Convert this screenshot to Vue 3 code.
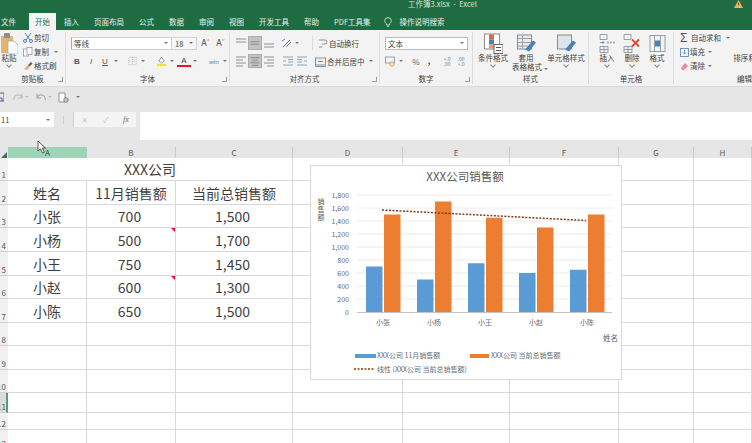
<template>
  <div class="excel">
    <div class="title-bar">
      <span class="doc-name">工作簿3.xlsx&nbsp; -&nbsp; Excel</span>
      <svg class="warn" width="9" height="8" viewBox="0 0 9 8"><path d="M4.5 0L9 8H0z" fill="#f0b35a"/><path d="M4.5 2.5v3" stroke="#7a5a20" stroke-width="1"/></svg>
    </div>
    <div class="tabs">
      <span v-for="tab in tabs" :key="tab" class="tab" :class="{ active: tab === '开始' }">{{ tab }}</span>
      <svg class="bulb" width="8" height="10" viewBox="0 0 8 10" fill="none" stroke="#e8f2ec" stroke-width="0.8"><path d="M2.4 6.6C1.4 5.9.7 5 .7 3.9a3.3 3.3 0 0 1 6.6 0c0 1.100-.7 2-1.700 2.700V8H2.400z"/><path d="M3 9.400h2"/></svg>
      <span class="search">操作说明搜索</span>
    </div>

    <div class="ribbon">
      <section class="group g-clip">
        <div class="body clip-body">
          <div class="big paste">
            <svg width="17" height="21" viewBox="0 0 17 21"><rect x="0" y="3" width="12" height="17" rx="1" fill="#e4b36c"/><rect x="3" y="0" width="6" height="5" rx="1" fill="#8d8d8d"/><path d="M7 8h6l4 4v9H7z" fill="#fff" stroke="#a0a0a0" stroke-width="0.7"/></svg>
            <span>粘贴</span>
            <i class="chev"></i>
          </div>
          <div class="clip-list">
            <div class="line">
              <svg width="10" height="10" viewBox="0 0 10 10" fill="none" stroke="#4a7fb8"><path d="M2 0l5 7M8 0L3 7"/><circle cx="2" cy="8" r="1.500"/><circle cx="8" cy="8" r="1.500"/></svg>
              <span>剪切</span>
            </div>
            <div class="line">
              <svg width="10" height="10" viewBox="0 0 10 10" fill="#fff" stroke="#8a9aa8" stroke-width="0.8"><rect x="0.500" y="2" width="5" height="7"/><rect x="4" y="0.500" width="5" height="7"/></svg>
              <span>复制</span>
              <i class="caret m-l4"></i>
            </div>
            <div class="line">
              <svg width="10" height="10" viewBox="0 0 10 10"><path d="M5 4l3-3 1.500 1.500-3 3z" fill="#5c5c5c"/><path d="M1 8l4-4 2 2-3 3z" fill="#e4b36c"/></svg>
              <span>格式刷</span>
            </div>
          </div>
        </div>
        <div class="label"><b></b><span>剪贴板</span><em></em></div>
      </section>

      <section class="group g-font">
        <div class="body">
          <div class="row">
            <div class="select font-name"><span>等线</span><i class="caret"></i></div>
            <div class="select font-size"><span>18</span><i class="caret"></i></div>
            <span class="tb grow-a">A<sup>^</sup></span>
            <span class="tb shrink-a">A<sup>ˇ</sup></span>
          </div>
          <div class="row">
            <span class="tb bold">B</span>
            <span class="tb ital">I</span>
            <span class="tb under">U</span>
            <i class="caret"></i>
            <svg class="m-l6" width="14" height="10" viewBox="0 0 14 10" fill="none" stroke="#9a9a9a" stroke-width="0.7" stroke-dasharray="1 1"><rect x="3" y="1" width="8" height="8"/><path d="M7 1v8M3 5h8"/></svg>
            <i class="caret"></i>
            <svg class="m-l8" width="14" height="12" viewBox="0 0 14 12"><path d="M4 6l3-4 3 4-3 2z" fill="#fff" stroke="#666" stroke-width="0.7"/><rect x="2" y="9" width="10" height="2.500" fill="#f6e71e"/></svg>
            <i class="caret"></i>
            <span class="tb color-a">A</span>
            <i class="caret"></i>
            <span class="tb wen m-l8">wén</span>
            <i class="caret"></i>
          </div>
        </div>
        <div class="label"><b></b><span>字体</span><em></em></div>
      </section>

      <section class="group g-align">
        <div class="body">
          <div class="row">
            <svg v-for="a in alignTop" :key="a.id" class="align-ico" :class="{ on: a.on }" width="14" height="14" viewBox="0 0 14 14" stroke="#777" stroke-width="0.8"><path :d="a.d"/></svg>
            <svg class="m-l5" width="12" height="10" viewBox="0 0 12 10" fill="none" stroke="#6f6f6f"><path d="M2 9l7-7M5 9l5-5"/><path d="M1 3l3-2" stroke="#5b87b8"/></svg>
            <i class="caret"></i>
            <span class="v-sep"></span>
            <svg class="m-l5" width="10" height="10" viewBox="0 0 10 10" fill="none" stroke="#777" stroke-width="0.8"><path d="M1 2h6a2 2 0 0 1 0 4H4M1 9h3"/></svg>
            <span class="txt m-l1">自动换行</span>
          </div>
          <div class="row">
            <svg v-for="a in alignBottom" :key="a.id" class="align-ico" :class="{ on: a.on }" width="14" height="14" viewBox="0 0 14 14" stroke="#777" stroke-width="0.8"><path :d="a.d"/></svg>
            <svg class="m-l6" width="12" height="10" viewBox="0 0 12 10" stroke="#6f8fb0" stroke-width="0.8"><path d="M1 1h10M6 3.500h5M6 6h5M1 9h10M1 5h3"/></svg>
            <svg class="m-l2" width="12" height="10" viewBox="0 0 12 10" stroke="#6f8fb0" stroke-width="0.8"><path d="M1 1h10M1 3.500h5M1 6h5M1 9h10M8 5h3"/></svg>
            <svg class="m-l7" width="11" height="11" viewBox="0 0 11 11" fill="none" stroke="#777" stroke-width="0.8"><rect x="0.500" y="2" width="10" height="7"/><path d="M3 5.500h5M0 10.500h11" stroke="#4a7fb8"/></svg>
            <span class="txt m-l1">合并后居中</span>
            <i class="caret m-l4"></i>
          </div>
        </div>
        <div class="label"><b></b><span>对齐方式</span><em></em></div>
      </section>

      <section class="group g-num">
        <div class="body">
          <div class="row">
            <div class="select num-format"><span>文本</span><i class="caret"></i></div>
          </div>
          <div class="row">
            <svg width="12" height="11" viewBox="0 0 12 11" fill="none" stroke="#6f8fb0" stroke-width="0.8"><rect x="0.500" y="1" width="9" height="6"/><circle cx="7" cy="8" r="2.200" fill="#f5d9a8" stroke="#e0a050"/></svg>
            <i class="caret"></i>
            <span class="tb pct">%</span>
            <span class="tb comma">,</span>
            <span class="tb dec first-dec">+.0<br>.00</span>
            <span class="tb dec">.00<br>+.0</span>
          </div>
        </div>
        <div class="label"><b></b><span>数字</span><em></em></div>
      </section>

      <section class="group g-style">
        <div class="body big-row">
          <div class="big cond">
            <svg width="19" height="20" viewBox="0 0 19 20"><rect x="0.500" y="0.500" width="15" height="15" fill="#fff" stroke="#8a8a8a"/><rect x="5" y="1" width="5" height="5" fill="#d9684a"/><rect x="5" y="6" width="5" height="5" fill="#4a7fb8"/><rect x="5" y="11" width="5" height="4" fill="#e59a7e"/><rect x="10" y="11" width="9" height="9" fill="#fff" stroke="#666"/><path d="M12 14h5M12 17h5" stroke="#555"/></svg>
            <span>条件格式</span>
            <i class="chev"></i>
          </div>
          <div class="big table-fmt">
            <svg width="19" height="20" viewBox="0 0 19 20"><rect x="0.500" y="1.500" width="14" height="14" fill="#e8edf2" stroke="#8a8a8a"/><path d="M1 5h13M1 9h13M1 12.500h13M5.500 2v13" stroke="#a0a0a0"/><path d="M8 16l8-9 3 2-7 9z" fill="#4a7fb8"/></svg>
            <span>套用</span>
            <span class="fmt-line">表格格式<i class="caret"></i></span>
          </div>
          <div class="big cell-style">
            <svg width="19" height="20" viewBox="0 0 19 20"><rect x="0.500" y="1.500" width="14" height="14" fill="#dce4ec" stroke="#8a8a8a"/><path d="M8 16l8-9 3 2-7 9z" fill="#4a7fb8"/></svg>
            <span>单元格样式</span>
            <i class="chev"></i>
          </div>
        </div>
        <div class="label"><b></b><span>样式</span><b></b></div>
      </section>

      <section class="group g-cells">
        <div class="body big-row">
          <div class="big cell-btn">
            <svg width="17" height="20" viewBox="0 0 17 20" fill="none" stroke="#7f8a94" stroke-width="0.8"><path d="M1 1h7v5H1zM1 13h8v6H1zM5 13v6M1 16h8"/><path d="M8 9h9" stroke="#9fb0c0" stroke-width="2" stroke-dasharray="2 1"/><path d="M1 9h4M3.500 7.500L5 9l-1.500 1.500" stroke="#4a7fb8"/></svg>
            <span>插入</span>
            <i class="chev"></i>
          </div>
          <div class="big cell-btn">
            <svg width="18" height="20" viewBox="0 0 18 20" fill="none" stroke="#7f8a94" stroke-width="0.8"><path d="M1 1h7v5H1zM1 13h8v6H1zM5 13v6M1 16h8"/><path d="M9 6l7 7M16 6l-7 7" stroke="#d9483b" stroke-width="1.800"/></svg>
            <span>删除</span>
            <i class="chev"></i>
          </div>
          <div class="big cell-btn">
            <svg width="17" height="20" viewBox="0 0 17 20" fill="none" stroke="#7f8a94" stroke-width="0.8"><rect x="1" y="2" width="15" height="16"/><path d="M5.500 2v16M11.500 2v16"/><rect x="6" y="7" width="5" height="6" fill="#4a7fb8" stroke="none"/></svg>
            <span>格式</span>
            <i class="chev"></i>
          </div>
        </div>
        <div class="label"><b></b><span>单元格</span><b></b></div>
      </section>

      <section class="group g-edit">
        <div class="body edit-body">
          <div class="clip-list edit-list">
            <div class="line"><span class="sigma">Σ</span><span>自动求和</span><i class="caret m-l4"></i></div>
            <div class="line">
              <svg width="9" height="9" viewBox="0 0 9 9" fill="none" stroke="#4a7fb8" stroke-width="0.8"><rect x="0.500" y="0.500" width="8" height="8"/><path d="M4.500 2v4M3 4.500l1.500 1.500L6 4.500"/></svg>
              <span>填充</span><i class="caret"></i>
            </div>
            <div class="line">
              <svg width="9" height="9" viewBox="0 0 9 9"><path d="M1 6l4-5 3 3-4 4H2z" fill="#e58aa0"/></svg>
              <span>清除</span><i class="caret"></i>
            </div>
          </div>
          <div class="big sort">
            <span class="az">A<br><u>Z</u></span>
            <span>排序和筛选</span>
          </div>
        </div>
        <div class="label edit-label"><span>编辑</span></div>
      </section>
    </div>

    <div class="qat">
      <svg class="save" width="4" height="10" viewBox="0 0 4 10" fill="none" stroke="#7a4e9c"><path d="M-5 1h9v8h-9zM-3 6h5v3"/></svg>
      <svg class="m-l9" width="10" height="9" viewBox="0 0 10 9" fill="none" stroke="#bdbdbd" stroke-width="1.200"><path d="M1 7a4 4 0 0 1 8-2M9 1v4H5"/></svg>
      <i class="caret pale"></i>
      <svg class="m-l5" width="10" height="9" viewBox="0 0 10 9" fill="none" stroke="#a8a8a8" stroke-width="1.200"><path d="M9 7A4 4 0 0 0 1 5M1 1v4h4"/></svg>
      <i class="caret pale"></i>
      <svg class="m-l4" width="11" height="11" viewBox="0 0 11 11" fill="#fff" stroke="#777" stroke-width="0.8"><path d="M1 1h6v9H1z"/><circle cx="8" cy="8" r="2.300" fill="#b8c8d8"/></svg>
      <i class="caret m-l7"></i>
    </div>

    <div class="formula-row">
      <div class="name-box"><span>11</span><i class="caret"></i></div>
      <span class="dots"></span>
      <div class="fx-box">
        <span class="fx-mark">✕</span>
        <span class="fx-mark">✓</span>
        <span class="fx">fx</span>
      </div>
      <div class="formula-input"></div>
    </div>

    <div class="col-head">
      <div class="corner"><svg width="7" height="7" viewBox="0 0 7 7"><path d="M7 0v7H0z" fill="#4d6b5c"/></svg></div>
      <div v-for="c in columns" :key="c" class="col-name" :class="{ current: c === 'A' }">{{ c }}</div>
    </div>

    <div class="sheet">
      <template v-for="row in rows" :key="row.no">
        <div class="row-no" :class="{ current: row.no === 11 }" :style="{ height: row.h + 'px' }"><span>{{ row.no }}</span></div>
        <template v-if="row.merged">
          <div class="cell merged">{{ row.merged }}</div>
          <div v-for="n in 5" :key="n" class="cell"></div>
        </template>
        <template v-else>
          <div v-for="(val, i) in row.cells" :key="i" class="cell" :class="{ noted: row.note && i === 1, num: row.data && i > 0 }">{{ val }}</div>
        </template>
      </template>

      <div class="chart">
        <svg width="312" height="215" viewBox="310 165 312 215">
          <text x="465" y="181" class="c-title" text-anchor="middle">XXX公司销售额</text>
          <text x="321" y="198" class="c-axis-v">销售额</text>

          <g v-for="t in ticks" :key="t.v">
            <line v-if="t.v > 0" x1="357" x2="612" :y1="t.y" :y2="t.y" stroke="#e6e6e6" stroke-width="0.8"/>
            <text x="349" :y="t.y + 2.500" class="c-label" text-anchor="end">{{ t.label }}</text>
          </g>
          <line x1="357" x2="612" y1="312.500" y2="312.500" stroke="#c4c4c4"/>

          <g v-for="b in bars" :key="b.name">
            <rect :x="b.x" :y="b.y1" width="16.500" :height="312 - b.y1" fill="#5b9bd5"/>
            <rect :x="b.x + 18" :y="b.y2" width="16.500" :height="312 - b.y2" fill="#ed7d31"/>
            <text :x="b.x + 17" y="325" class="c-label" text-anchor="middle">{{ b.name }}</text>
          </g>

          <line x1="382" y1="210" x2="586" y2="220.500" stroke="#843c0c" stroke-width="1.500" stroke-dasharray="2 1.500"/>

          <text x="603" y="341" class="c-axis-t">姓名</text>

          <rect x="355" y="354" width="21" height="4" fill="#5b9bd5"/>
          <text x="377" y="358" class="c-label">XXX公司 11月销售额</text>
          <rect x="470" y="354" width="19" height="4" fill="#ed7d31"/>
          <text x="491" y="358" class="c-label">XXX公司 当前总销售额</text>
          <line x1="354" y1="369" x2="375" y2="369" stroke="#843c0c" stroke-width="1.500" stroke-dasharray="2 1.500"/>
          <text x="377" y="372" class="c-label">线性 (XXX公司 当前总销售额)</text>
        </svg>
      </div>
    </div>

    <svg class="cursor" width="10" height="14" viewBox="0 0 10 14"><path d="M1 1v10l2.500-2.200L5.500 13l1.800-.8-2-4.200H8.500z" fill="#fff" stroke="#333" stroke-width="0.800"/></svg>
  </div>
</template>

<script setup>
const tabs = ['文件', '开始', '插入', '页面布局', '公式', '数据', '审阅', '视图', '开发工具', '帮助', 'PDF工具集']
const columns = ['A', 'B', 'C', 'D', 'E', 'F', 'G', 'H']

const alignTop = [
  { id: 't', d: 'M2 3h10M2 6h10' },
  { id: 'm', d: 'M2 5.500h10M2 8.500h10', on: true },
  { id: 'b', d: 'M2 8h10M2 11h10' }
]
const alignBottom = [
  { id: 'l', d: 'M2 3h10M2 6h7M2 9h10M2 12h7' },
  { id: 'c', d: 'M2 3h10M3.500 6h7M2 9h10M3.500 12h7', on: true },
  { id: 'r', d: 'M2 3h10M5 6h7M2 9h10M5 12h7' }
]

const sales = [
  ['小张', 700, 1500],
  ['小杨', 500, 1700],
  ['小王', 750, 1450],
  ['小赵', 600, 1300],
  ['小陈', 650, 1500]
]
const fmt = (n) => n.toLocaleString('en-US')

const heights = [23, 24, 23, 24, 24, 23, 24, 23, 24, 23, 20, 17, 20]
const blank = ['', '', '', '', '', '', '', '']

const rows = heights.map((h, i) => {
  const no = i + 1
  if (no === 1) return { no, h, merged: 'XXX公司' }
  if (no === 2) return { no, h, cells: ['姓名', '11月销售额', '当前总销售额', '', '', '', '', ''] }
  const s = sales[no - 3]
  if (s) return { no, h, data: true, note: no === 4 || no === 6, cells: [s[0], s[1], fmt(s[2]), '', '', '', '', ''] }
  return { no, h, cells: blank }
})

const ticks = [0, 200, 400, 600, 800, 1000, 1200, 1400, 1600, 1800].map((v) => ({
  v,
  y: 312 - v * 0.065,
  label: fmt(v)
}))

const bars = sales.map((s, i) => ({
  name: s[0],
  x: 366 + i * 51,
  y1: 312 - s[1] * 0.065,
  y2: 312 - s[2] * 0.065
}))
</script>

<style scoped>
.excel {
  position: relative;
  width: 752px;
  height: 443px;
  overflow: hidden;
  background: #e6e6e6;
  font-family: "Noto Sans CJK SC", "Noto Sans", sans-serif;
  color: #444;
}

.title-bar {
  height: 13px;
  background: #1f6c42;
  display: flex;
  align-items: flex-start;
  color: #d5e6dc;
  font-size: 7.5px;
  line-height: 7px;
}
.doc-name {
  margin-left: 408px;
}
.warn {
  margin-left: auto;
  margin-right: 9px;
}

.tabs {
  height: 17px;
  background: #1f6c42;
  display: flex;
  align-items: center;
  gap: 1px;
  color: #e8f2ec;
  font-size: 7.500px;
  white-space: nowrap;
  overflow: hidden;
}
.tab {
  height: 17px;
  line-height: 18px;
  padding: 0 7px;
}
.tab:first-child {
  margin-left: -6px;
}
.tab.active {
  background: #f3f3f3;
  color: #217346;
  padding: 0 6px;
  margin-left: 5px;
}
.bulb {
  margin-left: 5px;
}
.search {
  margin-left: 7px;
}

.ribbon {
  height: 57px;
  background: #f3f3f3;
  border-bottom: 1px solid #dadada;
  box-sizing: border-box;
  display: flex;
  font-size: 7.500px;
  color: #444;
  white-space: nowrap;
  overflow: hidden;
}
.group {
  box-sizing: border-box;
  margin: 2px 0;
  border-right: 1px solid #dcdcdc;
  display: flex;
  flex-direction: column;
  flex: none;
}
.g-clip { width: 66px; }
.g-font { width: 164px; }
.g-align { width: 150px; }
.g-num { width: 93px; }
.g-style { width: 116px; }
.g-cells { width: 85px; }
.g-edit { width: 78px; border-right: none; }

.body {
  height: 42px;
  flex: none;
  padding-top: 4px;
  box-sizing: border-box;
}
.label {
  height: 10px;
  line-height: 10px;
  display: grid;
  grid-template-columns: 1fr auto 1fr;
  justify-items: center;
}
.label em {
  justify-self: end;
  width: 4px;
  height: 4px;
  margin: 3px 2px 0 0;
  border-right: 1px solid #999;
  border-bottom: 1px solid #999;
}
.edit-label {
  display: flex;
  padding-left: 63px;
}

.row {
  height: 14px;
  margin-bottom: 4px;
  padding-left: 5px;
  display: flex;
  align-items: center;
}
.tb {
  display: inline-block;
  text-align: center;
  flex: none;
}

.caret {
  display: inline-block;
  flex: none;
  width: 0;
  height: 0;
  margin: 0 2px;
  border-left: 2px solid transparent;
  border-right: 2px solid transparent;
  border-top: 2px solid #777;
}
.caret.pale {
  border-top-color: #bbb;
}
.chev {
  display: block;
  width: 3px;
  height: 3px;
  margin-top: 1px;
  border-right: 1px solid #888;
  border-bottom: 1px solid #888;
  transform: rotate(45deg);
}

.select {
  height: 13px;
  background: #fff;
  border: 1px solid #d0d0d0;
  box-sizing: border-box;
  display: flex;
  align-items: center;
  justify-content: space-between;
  padding: 0 1px 0 2px;
  flex: none;
}
.font-name { width: 101px; border-left-color: #aaa; }
.font-size { width: 25px; border-left: none; background: #f7f7f7; padding-left: 3px; }
.num-format { width: 83px; border-color: #bbb; }

.grow-a, .shrink-a {
  font-size: 9px;
  width: 15px;
  line-height: 10px;
}
.grow-a { margin-left: 1px; }
.grow-a sup, .shrink-a sup {
  font-size: 5px;
  color: #c27b3a;
  vertical-align: 3px;
  line-height: 0;
}

.bold, .ital, .under {
  width: 14px;
  font-family: "Liberation Sans", sans-serif;
  font-size: 8px;
  color: #555;
}
.g-font .row + .row { padding-left: 4px; }
.bold { font-weight: 700; }
.ital { font-style: italic; }
.under { text-decoration: underline; }
.color-a {
  width: 14px;
  margin-left: 1px;
  font-family: "Liberation Sans", sans-serif;
  font-size: 8px;
  line-height: 9px;
  border-bottom: 2px solid #e21b1b;
  box-sizing: border-box;
  height: 11px;
  color: #444;
}
.wen {
  width: 14px;
  font-size: 5px;
  color: #4a7fb8;
}
.pct {
  width: 14px;
  margin-left: 4px;
  font-size: 8px;
  color: #666;
}
.comma {
  width: 14px;
  margin-left: -1px;
  font-size: 8px;
  font-weight: 700;
  line-height: 8px;
}
.dec {
  width: 14px;
  font-size: 5px;
  line-height: 5px;
  color: #5f7f9f;
}
.first-dec {
  margin-left: 4px;
}

.m-l1 { margin-left: 1px; }
.m-l2 { margin-left: 2px; }
.m-l4 { margin-left: 4px; }
.m-l5 { margin-left: 5px; }
.m-l6 { margin-left: 6px; }
.m-l7 { margin-left: 7px; }
.m-l8 { margin-left: 8px; }
.m-l9 { margin-left: 9px; }

.align-ico { flex: none; }
.align-ico.on {
  background: #c2c2c2;
  border: 1px solid #adadad;
  box-sizing: border-box;
}
.g-align .row { padding-left: 4px; }
.v-sep {
  width: 1px;
  height: 14px;
  background: #dcdcdc;
  margin-left: 11px;
}
.txt { font-size: 7.500px; }

.clip-body, .edit-body {
  display: flex;
}
.big {
  display: flex;
  flex-direction: column;
  align-items: center;
  line-height: 9px;
  flex: none;
  margin-top: -3px;
}
.big svg {
  margin-bottom: -1px;
  height: 21px;
}
.paste {
  width: 20px;
  margin-left: -1px;
}
.clip-list {
  margin-left: 4px;
  margin-top: -3px;
  display: flex;
  flex-direction: column;
  gap: 4px;
}
.line {
  height: 10px;
  line-height: 10px;
  display: flex;
  align-items: center;
  gap: 1px;
}
.edit-list {
  margin-left: 6px;
  width: 58px;
  flex: none;
}
.sigma {
  width: 10px;
  font-size: 12px;
  font-family: "Liberation Sans", sans-serif;
  color: #555;
}

.big-row {
  display: flex;
}
.cond { width: 32px; margin-left: 4px; }
.table-fmt { width: 28px; margin-left: 3px; }
.fmt-line .caret { margin-right: -8px; }
.cell-style { width: 38px; margin-left: 7px; }
.cell-btn { width: 24px; }
.cell-btn + .cell-btn { margin-left: 1px; }
.g-cells .big-row { padding-left: 6px; }
.sort {
  width: 40px;
  margin-left: -6px;
}
.az {
  height: 20px;
  line-height: 9px;
  font-size: 10px;
  font-family: "Liberation Sans", sans-serif;
  color: #4a7fb8;
  text-align: center;
  margin-left: 12px;
}
.az u {
  color: #7a4e9c;
  text-decoration: none;
}

.qat {
  height: 25px;
  padding-bottom: 5px;
  box-sizing: border-box;
  display: flex;
  align-items: center;
}

.formula-row {
  height: 35px;
  display: flex;
  align-items: flex-start;
}
.name-box {
  width: 54px;
  height: 15px;
  background: #fff;
  box-sizing: border-box;
  padding: 0 2px 0 1px;
  font-size: 7.500px;
  display: flex;
  align-items: center;
  justify-content: space-between;
}
.dots {
  width: 1px;
  height: 8px;
  margin: 4px 0 0 9px;
  background: #cfcfcf;
}
.fx-box {
  width: 63px;
  height: 15px;
  margin-left: 9px;
  background: #f4f4f4;
  display: flex;
  align-items: center;
  justify-content: space-around;
  font-size: 8px;
  color: #c8c8c8;
  box-sizing: border-box;
  border-left: 1px solid #d0d0d0;
}
.fx {
  font-style: italic;
  color: #666;
  font-family: "Liberation Serif", serif;
}
.formula-input {
  flex: 1;
  height: 28px;
  margin-left: 4px;
  background: #fff;
}

.col-head {
  height: 11px;
  display: grid;
  grid-template-columns: 8px 79px 89px 117px 110px 107px 109px 75px 58px;
  font-size: 8px;
  line-height: 12px;
  color: #555;
  text-align: center;
}
.corner {
  display: flex;
  align-items: flex-end;
}
.col-name {
  border-right: 1px solid #c8c8c8;
  box-sizing: border-box;
}
.col-name.current {
  background: #9fd5b7;
  color: #2c4a3a;
  border-right: none;
}

.sheet {
  position: relative;
  height: 285px;
  background: #fff;
  overflow: hidden;
  display: grid;
  grid-template-columns: 8px 79px 89px 117px 110px 107px 109px 75px 58px;
  grid-auto-rows: min-content;
}
.row-no {
  background: #f0f0f0;
  border-bottom: 1px solid #d0d0d0;
  box-sizing: border-box;
  display: flex;
  justify-content: flex-end;
  align-items: flex-end;
  padding-right: 2px;
  overflow: hidden;
  font-size: 8px;
  line-height: 10px;
  color: #555;
}
.row-no span {
  flex: none;
}
.row-no.current {
  background: #dcdcdc;
  border-right: 2px solid #5b9a7c;
  padding-right: 0;
}
.cell {
  position: relative;
  border-right: 1px solid #d8d8d8;
  border-bottom: 1px solid #d8d8d8;
  box-sizing: border-box;
  display: flex;
  align-items: center;
  justify-content: center;
  font-size: 14px;
  line-height: 20px;
  color: #3f3f3f;
  white-space: nowrap;
}
.cell.num {
  padding-right: 3px;
}
.merged {
  grid-column: span 3;
}
.noted::after {
  content: "";
  position: absolute;
  top: 0;
  right: 0;
  border-top: 4px solid #e0102a;
  border-left: 4px solid transparent;
}

.chart {
  position: absolute;
  left: 310px;
  top: 7px;
  width: 312px;
  height: 215px;
  background: #fff;
  box-shadow: inset 0 0 0 1px #d9d9d9;
}
.c-title {
  font-size: 11.500px;
  fill: #595959;
}
.c-label {
  font-size: 7px;
  fill: #6a6a6a;
}
.c-axis-t {
  font-size: 7.500px;
  fill: #595959;
}
.c-axis-v {
  font-size: 7px;
  letter-spacing: 1px;
  fill: #595959;
  writing-mode: vertical-rl;
  text-orientation: upright;
}

.cursor {
  position: absolute;
  left: 37px;
  top: 140px;
}
</style>
